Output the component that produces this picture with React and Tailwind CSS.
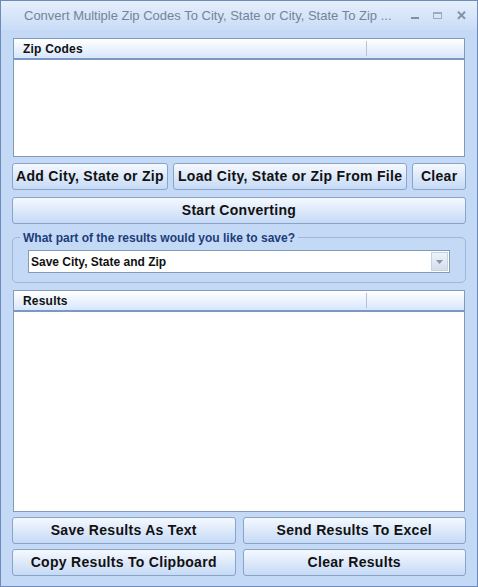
import { useState } from 'react';

const btn =
  'h-[27px] rounded-[3px] border border-[#8aa3c8] bg-gradient-to-b from-[#f5f9ff] via-[#dde9fa] to-[#c6daf5] text-[14px] font-bold tracking-[0.3px] text-[#111] flex items-center justify-center whitespace-nowrap';

function ListPanel({ title, height }) {
  return (
    <div className={`mx-[12px] border border-[#7f9db9] bg-white ${height}`}>
      <div className="flex h-[21px] border-b-2 border-[#7a98c4] bg-gradient-to-b from-white to-[#d8e6fb]">
        <div className="flex-1 flex items-center pl-[9px] pt-[1px] text-[12px] font-bold tracking-[0.2px] text-[#111]">{title}</div>
        <div className="w-[98px] border-l border-[#b0c4de] my-[2px]" />
      </div>
    </div>
  );
}

export default function App() {
  const [choice, setChoice] = useState('Save City, State and Zip');

  return (
    <div
      className="w-[478px] h-[587px] bg-[#c4d9f6] border border-[#6d8ab8] flex flex-col overflow-hidden"
      style={{ fontFamily: '"Liberation Sans", Arial, sans-serif' }}
    >
      {/* title bar */}
      <div className="h-[29px] flex items-center bg-gradient-to-b from-[#e6effb] to-[#c9dcf6] pl-[23px] pr-[10px]">
        <div className="flex-1 text-[13px] text-[#75849a] truncate">
          Convert Multiple Zip Codes To City, State or City, State To Zip ...
        </div>
        <div className="flex items-center gap-[14px] text-[#8a9bb3]">
          <span className="w-[8px] h-[2px] bg-[#7f90a8] mt-[4px]" />
          <span className="w-[9px] h-[7px] border border-[#9aabc2] border-t-2" />
          <span className="text-[13px] font-bold leading-none text-[#7f90a8]">✕</span>
        </div>
      </div>

      <div className="pt-[8px]">
        <ListPanel title="Zip Codes" height="h-[119px]" />
      </div>

      <div className="flex gap-[5px] px-[11px] mt-[6px]">
        <button className={`${btn} w-[157px]`}>Add City, State or Zip</button>
        <button className={`${btn} w-[236px]`}>Load City, State or Zip From File</button>
        <button className={`${btn} w-[54px]`}>Clear</button>
      </div>

      <div className="px-[11px] mt-[7px]">
        <button className={`${btn} w-full h-[26px]`}>Start Converting</button>
      </div>

      <div className="relative mx-[11px] mt-[13px] h-[46px] rounded-[5px] border border-[#9fb6d8]">
        <div className="absolute -top-[9px] left-[7px] px-[3px] bg-[#c4d9f6] text-[12px] font-bold text-[#1c3d7a]">
          What part of the results would you like to save?
        </div>
        <div className="mx-[15px] mt-[12px] h-[23px] flex border border-[#7f9db9] bg-white">
          <select
            value={choice}
            onChange={(e) => setChoice(e.target.value)}
            className="hidden"
          >
            <option>Save City, State and Zip</option>
          </select>
          <div className="flex-1 flex items-center pl-[2px] text-[12px] font-bold text-[#111]">{choice}</div>
          <div className="w-[17px] m-[1px] flex items-center justify-center bg-gradient-to-b from-[#eef3fa] to-[#d3deec] border border-[#c5d2e3]">
            <svg width="7" height="4" viewBox="0 0 7 4"><path d="M0 0h7L3.5 4z" fill="#8a96a8" /></svg>
          </div>
        </div>
      </div>

      <div className="mt-[7px]">
        <ListPanel title="Results" height="h-[222px]" />
      </div>

      <div className="grid grid-cols-2 gap-x-[7px] gap-y-[5px] px-[11px] mt-[5px]">
        <button className={`${btn} w-full h-[27px]`}>Save Results As Text</button>
        <button className={`${btn} w-full h-[27px]`}>Send Results To Excel</button>
        <button className={`${btn} w-full h-[27px]`}>Copy Results To Clipboard</button>
        <button className={`${btn} w-full h-[27px]`}>Clear Results</button>
      </div>
    </div>
  );
}
